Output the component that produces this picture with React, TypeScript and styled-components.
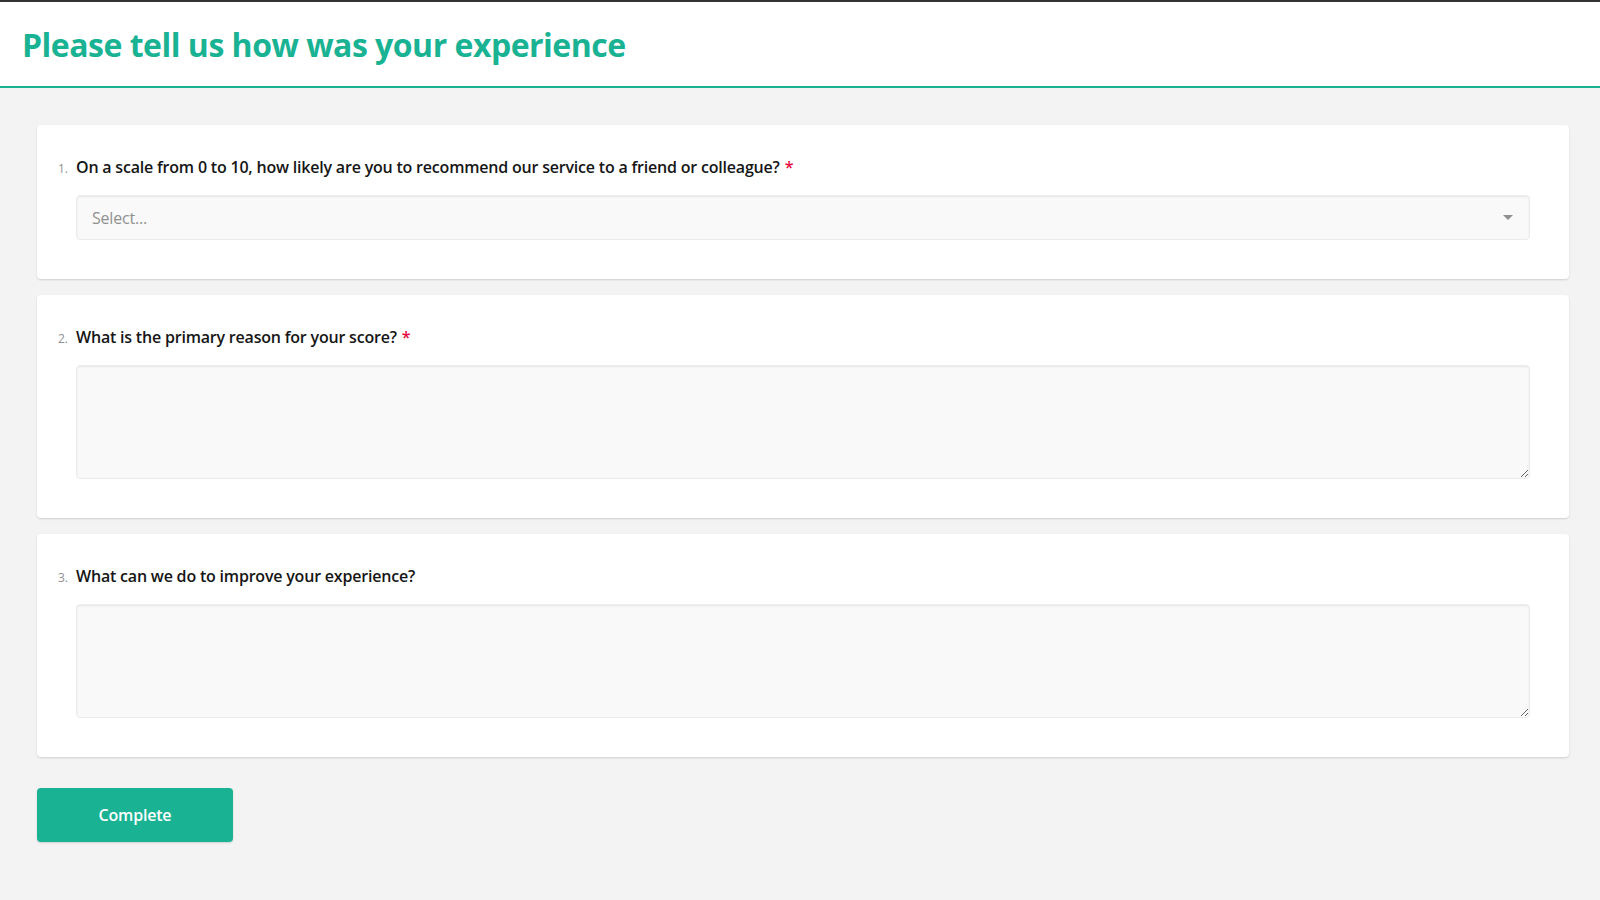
import React from 'react';
import styled, { createGlobalStyle } from 'styled-components';

const GlobalStyle = createGlobalStyle`
  html, body {
    margin: 0;
    padding: 0;
    background: #f3f3f3;
  }
  body {
    font-family: 'Open Sans', 'Liberation Sans', sans-serif;
    letter-spacing: -0.2px;
    color: #161616;
  }
  * {
    box-sizing: border-box;
  }
`;

const Page = styled.div`
  min-height: 900px;
  background: #f3f3f3;
  border-top: 2px solid #333333;
`;

const Header = styled.header`
  background: #ffffff;
  padding: 23px 22px 21px;
  border-bottom: 2px solid #19b394;
`;

const SurveyTitle = styled.h1`
  margin: 0;
  font-size: 32px;
  line-height: 40px;
  font-weight: 700;
  letter-spacing: -0.5px;
  color: #19b394;
`;

const Body = styled.main`
  padding: 37px 31px 40px 37px;
  display: flex;
  flex-direction: column;
  gap: 16px;
`;

const Card = styled.section`
  background: #ffffff;
  border-radius: 4px;
  box-shadow: 0 1px 2px rgba(0, 0, 0, 0.15);
  padding: 30px 39px 39px 39px;
  display: flex;
  flex-direction: column;
  gap: 16px;
`;

const QuestionTitle = styled.h5`
  margin: 0;
  font-size: 16px;
  line-height: 24px;
  font-weight: 600;
  color: #161616;
`;

const Number = styled.span`
  display: inline-block;
  width: 18px;
  margin-left: -18px;
  font-size: 12px;
  line-height: 1;
  font-weight: 400;
  color: #909090;
`;

const Required = styled.span`
  color: #e60a3e;
  margin-left: 5px;
`;

const Select = styled.div`
  height: 45px;
  display: flex;
  align-items: center;
  justify-content: space-between;
  padding: 0 16px 0 15px;
  background: #f9f9f9;
  border: 1px solid #ececec;
  border-radius: 4px;
  box-shadow: inset 0 1px 2px rgba(0, 0, 0, 0.08);
  font-size: 16px;
  color: #909090;
  cursor: pointer;
`;

const Comment = styled.textarea`
  display: block;
  width: 100%;
  height: 114px;
  resize: vertical;
  background: #f9f9f9;
  border: 1px solid #ececec;
  border-radius: 4px;
  box-shadow: inset 0 1px 2px rgba(0, 0, 0, 0.08);
  padding: 12px 16px;
  font-family: inherit;
  font-size: 16px;
  color: #161616;
  outline: none;
`;

const Footer = styled.div`
  padding-top: 15px;
`;

const CompleteButton = styled.button`
  width: 196px;
  height: 54px;
  border: none;
  border-radius: 4px;
  background: #19b394;
  box-shadow: 0 1px 2px rgba(0, 0, 0, 0.15);
  color: #ffffff;
  font-family: inherit;
  font-size: 16px;
  font-weight: 600;
  letter-spacing: -0.2px;
  cursor: pointer;
`;

const ArrowDown = () => (
  <svg width="10" height="5" viewBox="0 0 10 5">
    <path d="M0 0h10L5 5z" fill="#909090" />
  </svg>
);

type QuestionProps = {
  no: number;
  title: string;
  required?: boolean;
  children: React.ReactNode;
};

const Question = ({ no, title, required, children }: QuestionProps) => (
  <Card>
    <QuestionTitle>
      <Number>{no}.</Number>
      {title}
      {required && <Required>*</Required>}
    </QuestionTitle>
    {children}
  </Card>
);

export default function App() {
  return (
    <Page>
      <GlobalStyle />
      <Header>
        <SurveyTitle>Please tell us how was your experience</SurveyTitle>
      </Header>
      <Body>
        <Question
          no={1}
          required
          title="On a scale from 0 to 10, how likely are you to recommend our service to a friend or colleague?"
        >
          <Select>
            <span>Select...</span>
            <ArrowDown />
          </Select>
        </Question>
        <Question no={2} required title="What is the primary reason for your score?">
          <Comment />
        </Question>
        <Question no={3} title="What can we do to improve your experience?">
          <Comment />
        </Question>
        <Footer>
          <CompleteButton>Complete</CompleteButton>
        </Footer>
      </Body>
    </Page>
  );
}
